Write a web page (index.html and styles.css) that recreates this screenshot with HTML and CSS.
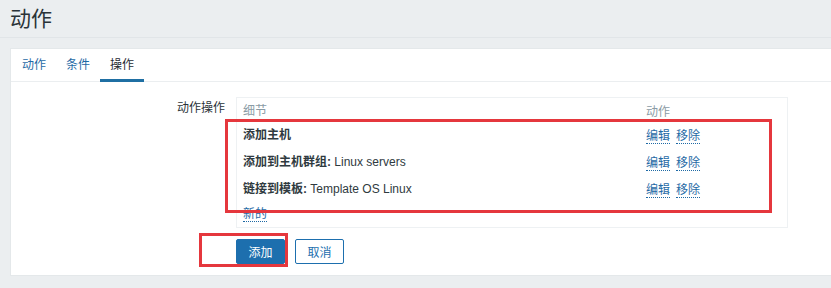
FILE: index.html
```html
<!DOCTYPE html>
<html lang="zh-CN">
<head>
  <meta charset="UTF-8" />
  <title>动作</title>
  <link rel="stylesheet" href="styles.css">
</head>
<body>
  <div class="page-header">
    <h1>动作</h1>
  </div>

  <div class="panel">
    <ul class="tabs">
      <li class="tab">动作</li>
      <li class="tab">条件</li>
      <li class="tab active">操作</li>
    </ul>

    <div class="form-row">
      <div class="form-label">动作操作</div>
      <div class="form-field">
        <div class="op-table">
          <div class="op-row op-head">
            <span class="col-detail">细节</span>
            <span class="col-action">动作</span>
          </div>
          <div class="op-row">
            <span class="col-detail"><b>添加主机</b></span>
            <span class="col-action"><a class="link">编辑</a><a class="link">移除</a></span>
          </div>
          <div class="op-row">
            <span class="col-detail"><b>添加到主机群组:</b> Linux servers</span>
            <span class="col-action"><a class="link">编辑</a><a class="link">移除</a></span>
          </div>
          <div class="op-row">
            <span class="col-detail"><b>链接到模板:</b> Template OS Linux</span>
            <span class="col-action"><a class="link">编辑</a><a class="link">移除</a></span>
          </div>
          <div class="op-new"><a class="link">新的</a></div>
          <div class="mark mark-rows"></div>
        </div>

        <div class="buttons">
          <div class="btn-wrap">
            <button class="btn btn-primary">添加</button>
            <div class="mark mark-btn"></div>
          </div>
          <button class="btn btn-alt">取消</button>
        </div>
      </div>
    </div>
  </div>
</body>
</html>
```

FILE: styles.css
```css
body {
  margin: 0;
  background: #ebeef0;
  font-family: "Liberation Sans", "Noto Sans CJK SC", sans-serif;
  font-size: 12px;
  color: #1f2c33;
}

.page-header {
  height: 37px;
  border-bottom: 1px solid #e1e5e8;
  padding-left: 10px;
}

.page-header h1 {
  margin: 0;
  font-weight: normal;
  font-size: 21px;
  line-height: 38px;
  color: #2a3338;
}

.panel {
  margin: 10px 0 0 10px;
  background: #ffffff;
  border: 1px solid #e4e8ea;
  border-right: none;
  height: 228px;
  box-sizing: border-box;
}

.tabs {
  list-style: none;
  margin: 0;
  padding: 0 0 0 1px;
  display: flex;
  height: 32px;
  border-bottom: 1px solid #ebeef0;
}

.tab {
  padding: 0 10px;
  line-height: 32px;
  color: #1f6aa5;
  position: relative;
}

.tab.active {
  color: #1f2c33;
}

.tab.active::after {
  content: "";
  position: absolute;
  left: 0;
  right: 0;
  bottom: -1px;
  height: 3px;
  background: #1f6fa3;
}

.form-row {
  display: flex;
  padding-top: 15px;
}

.form-label {
  width: 214px;
  text-align: right;
  padding-right: 11px;
  line-height: 22px;
  color: #2a3338;
}

.form-field {
  display: flex;
  flex-direction: column;
}

.op-table {
  position: relative;
  width: 552px;
  box-sizing: border-box;
  border: 1px solid #eef1f3;
  padding: 0 6px 4px;
}

.op-row {
  display: flex;
  height: 27px;
  align-items: center;
}

.op-head {
  height: 22px;
  color: #8a9ba5;
}

.col-detail {
  width: 403px;
  color: #2f3a40;
}

.op-head .col-detail {
  color: #8a9ba5;
}

.col-action {
  display: flex;
  gap: 6px;
  padding-top: 2px;
}

.op-new {
  height: 20px;
  display: flex;
  align-items: center;
  padding-top: 2px;
}

.link {
  color: #1f6aa5;
  border-bottom: 1px dotted #1f6aa5;
  cursor: pointer;
}

.mark {
  position: absolute;
  border: 3px solid #e5373d;
  box-sizing: border-box;
  pointer-events: none;
}

.mark-rows {
  left: -12px;
  top: 21px;
  width: 547px;
  height: 94px;
}

.buttons {
  display: flex;
  gap: 10px;
  margin-top: 11px;
}

.btn-wrap {
  position: relative;
}

.mark-btn {
  left: -37px;
  top: -6px;
  width: 89px;
  height: 34px;
}

.btn {
  height: 25px;
  width: 49px;
  font-family: "Liberation Sans", "Noto Sans CJK SC", sans-serif;
  font-size: 12px;
  border-radius: 2px;
  padding: 0;
  cursor: pointer;
}

.btn-primary {
  background: #1d6fae;
  border: 1px solid #1d6fae;
  color: #ffffff;
}

.btn-alt {
  background: #ffffff;
  border: 1px solid #1d6fae;
  color: #1d6fae;
}
```
